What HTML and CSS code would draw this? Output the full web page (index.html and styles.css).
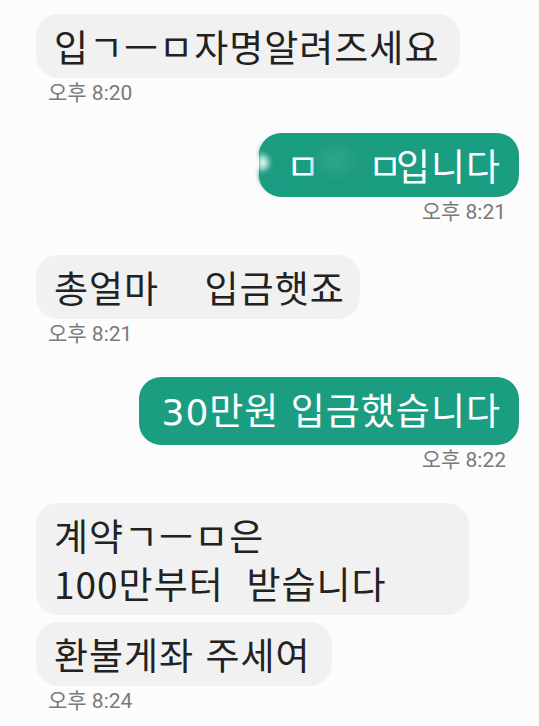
FILE: index.html
```html
<!DOCTYPE html>
<html lang="ko">
<head>
    <meta charset="UTF-8">
    <title>대화</title>
    <link rel="stylesheet" href="styles.css">
</head>
<body>
<div class="chat">
    <div class="msg left first">
        <div class="bubble">입ㄱㅡㅁ자명알려즈세요</div>
        <div class="time">오후 8:20</div>
    </div>
    <div class="msg right">
        <div class="bubble masked"><span class="smudge s1"></span><span class="cut">ㅁ</span><span class="smudge s2"></span><span class="cut">ㅁ</span>입니다</div>
        <div class="time">오후 8:21</div>
    </div>
    <div class="msg left">
        <div class="bubble short">총얼마&nbsp;&nbsp;&nbsp; 입금햇죠</div>
        <div class="time">오후 8:21</div>
    </div>
    <div class="msg right">
        <div class="bubble"><span class="num">30</span>만원 입금했습니다</div>
        <div class="time">오후 8:22</div>
    </div>
    <div class="msg left">
        <div class="bubble wide">계약ㄱㅡㅁ은<br>100만부터&nbsp; 받습니다</div>
        <div class="bubble">환불게좌 주세여</div>
        <div class="time">오후 8:24</div>
    </div>
</div>
</body>
</html>
```

FILE: styles.css
```css
*{
    margin: 0;
    padding: 0;
    box-sizing: border-box;
}
html, body{
    width: 100%;
    height: 100%;
    background-color: #fcfcfc;
}
body{
    font-family: "Noto Sans CJK KR", "Noto Sans", sans-serif;
    overflow: hidden;
}
.chat{
    display: flex;
    flex-direction: column;
    gap: 31px;
    padding-top: 14px;
}
.msg{
    display: flex;
    flex-direction: column;
    gap: 7px;
}
.msg.first{
    margin-bottom: -3px;
}
.msg.left{
    align-items: flex-start;
    padding-left: 36px;
}
.msg.right{
    align-items: flex-end;
    padding-right: 20px;
}
.bubble{
    font-size: 37px;
    line-height: 48px;
    letter-spacing: 1px;
    padding: 8px 21px 8px 18px;
    border-radius: 22px;
    background-color: #f1f1f1;
    color: #222;
}
.bubble.short{
    padding-right: 15px;
}
.bubble.wide{
    padding-right: 82px;
}
.right .bubble{
    background-color: #1b9d82;
    color: #fff;
    padding: 8px 18px 8px 23px;
}
.num{
    font-family: "DejaVu Sans", sans-serif;
    font-size: 36px;
    letter-spacing: 1px;
}
.time{
    font-family: Roboto, "Noto Sans CJK KR", sans-serif;
    font-size: 21px;
    line-height: 24px;
    color: #7a7a7a;
    margin-top: -4px;
}
.left .time{
    padding-left: 12px;
}
.right .time{
    padding-right: 13px;
}
.right .bubble.masked{
    padding-left: 0;
}
.smudge{
    display: inline-block;
    height: 48px;
    vertical-align: top;
    border-radius: 16px;
    background: radial-gradient(ellipse at 40% 40%, #2aa88c 0%, #1e9a7f 55%, #1b9d82 100%);
    filter: blur(2px);
}
.s1{
    width: 27px;
    background: radial-gradient(circle at 8% 45%, #e8fff8 0 8%, #1d9a80 30%, #1b9d82 100%);
}
.s2{
    width: 54px;
}
.cut{
    display: inline-block;
    width: 28px;
    overflow: hidden;
    vertical-align: top;
}
```
